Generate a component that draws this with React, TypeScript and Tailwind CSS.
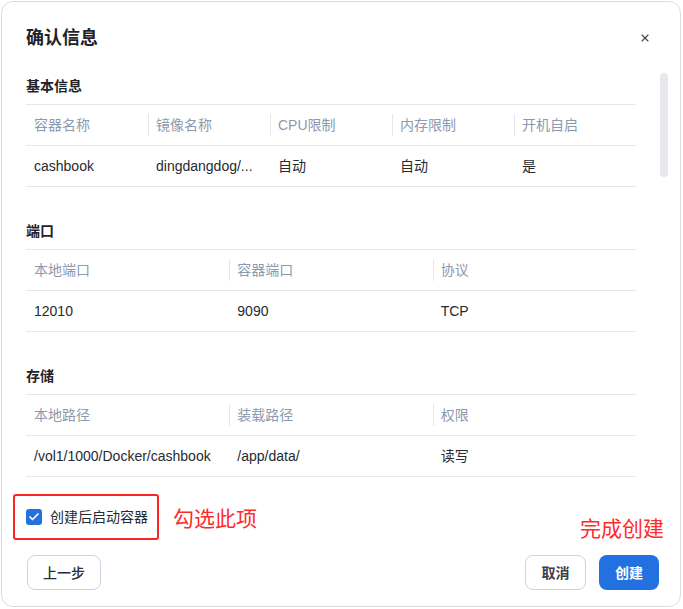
import { Check, X } from 'lucide-react'

const font = { fontFamily: '"Liberation Sans", "Noto Sans CJK SC", sans-serif' }

interface Section {
  title: string
  headers: string[]
  row: string[]
}

const sections: Section[] = [
  {
    title: '基本信息',
    headers: ['容器名称', '镜像名称', 'CPU限制', '内存限制', '开机自启'],
    row: ['cashbook', 'dingdangdog/...', '自动', '自动', '是'],
  },
  {
    title: '端口',
    headers: ['本地端口', '容器端口', '协议'],
    row: ['12010', '9090', 'TCP'],
  },
  {
    title: '存储',
    headers: ['本地路径', '装载路径', '权限'],
    row: ['/vol1/1000/Docker/cashbook', '/app/data/', '读写'],
  },
]

function InfoTable({ headers, row }: { headers: string[]; row: string[] }) {
  const cols = headers.length === 5 ? 'grid-cols-5' : 'grid-cols-3'
  return (
    <div className="border-t border-[#e4e7ec] text-sm">
      <div className={`grid ${cols} h-[41px] border-b border-[#e4e7ec]`}>
        {headers.map((h, i) => (
          <div key={h} className="flex items-center min-w-0">
            {i > 0 ? <span className="w-px h-[22px] bg-[#e4e7ec] shrink-0" /> : <span className="w-px shrink-0" />}
            <span className="pl-[7px] text-[#8d99ae] truncate">{h}</span>
          </div>
        ))}
      </div>
      <div className={`grid ${cols} h-[41px] border-b border-[#e4e7ec]`}>
        {row.map((c, i) => (
          <div key={i} className="flex items-center min-w-0 px-2 text-[#262a31]">
            <span className="whitespace-nowrap">{c}</span>
          </div>
        ))}
      </div>
    </div>
  )
}

export default function App() {
  return (
    <div className="w-[683px] h-[609px] bg-white pt-px pl-px" style={font}>
      <div className="w-[680px] h-[606px] border border-[#d9dce1] rounded-xl bg-white flex flex-col overflow-hidden">
        {/* Header */}
        <div className="flex items-center justify-between pl-6 pr-[29px] pt-[22px] shrink-0">
          <h2 className="text-lg leading-7 font-bold text-[#1f2329]">确认信息</h2>
          <X className="w-3 h-3 text-[#3c4454]" strokeWidth={2.2} />
        </div>

        {/* Body */}
        <div className="flex flex-1 min-h-0 pl-6 pr-3">
          <div className="w-[610px] pt-6 overflow-hidden shrink-0">
            {sections.map((s, i) => (
              <div key={s.title} className={i > 0 ? 'mt-[34px]' : ''}>
                <h3 className="text-sm leading-5 font-bold text-[#1f2329] mb-2">{s.title}</h3>
                <InfoTable headers={s.headers} row={s.row} />
              </div>
            ))}
          </div>
          <div className="flex-1 flex justify-end pt-[21px]">
            <div className="w-2 h-[104px] rounded-full bg-[#e6e8eb]" />
          </div>
        </div>

        {/* Footer */}
        <div className="shrink-0 pt-[7px] pb-[16px] pl-[11px] pr-[16px]">
          <div className="flex items-start justify-between">
            <div className="flex items-center">
              <label className="flex items-center gap-2 h-[46px] w-[146px] border-2 border-[#ff2424] rounded-[3px] pl-[11px]">
                <span className="w-4 h-4 rounded-[3px] bg-[#2370e0] flex items-center justify-center">
                  <Check className="w-3 h-3 text-white" strokeWidth={3.5} />
                </span>
                <span className="text-sm text-[#262a31]">创建后启动容器</span>
              </label>
              <span className="ml-[14px] mt-1 text-[21px] leading-7 text-[#ff2a2a]">勾选此项</span>
            </div>
            <span className="mt-[21px] text-[21px] leading-7 text-[#ff2a2a]">完成创建</span>
          </div>
          <div className="flex items-center justify-between mt-3 pl-[14px] pr-[5px]">
            <button className="h-[35px] w-[74px] rounded-lg border border-[#c9d3e0] text-sm font-medium text-[#2b2f36]">
              上一步
            </button>
            <div className="flex items-center gap-[13px]">
              <button className="h-[35px] w-[61px] rounded-lg border border-[#c9d3e0] text-sm font-bold text-[#3a404b]">
                取消
              </button>
              <button className="h-[35px] w-[60px] rounded-lg bg-[#2370e0] text-sm font-bold text-white">
                创建
              </button>
            </div>
          </div>
        </div>
      </div>
    </div>
  )
}
